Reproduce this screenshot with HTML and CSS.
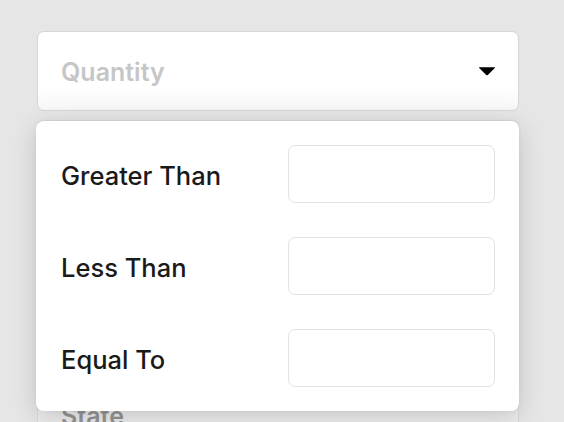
FILE: index.html
```html
<!DOCTYPE html>
<html>
<head>
<meta charset="utf-8">
<link rel="stylesheet" href="styles.css">
</head>
<body>
<div class="page">
  <div class="fields">
    <div class="select">
      <span class="select-label">Quantity</span>
      <svg class="caret" width="18" height="10" viewBox="0 0 18 10"><path d="M1.5 1.2 H16.5 Q17.6 1.2 16.8 2.1 L9.8 8.9 Q9 9.6 8.2 8.9 L1.2 2.1 Q0.4 1.2 1.5 1.2 Z" fill="#000"/></svg>
    </div>
    <div class="rest">
      <div class="field"></div>
      <div class="field"></div>
      <div class="field"></div>
      <div class="field"><span class="field-label">State</span></div>
    </div>
    <div class="popup">
      <div class="row"><span class="row-label">Greater Than</span><input class="num" type="text"></div>
      <div class="row"><span class="row-label">Less Than</span><input class="num" type="text"></div>
      <div class="row"><span class="row-label">Equal To</span><input class="num" type="text"></div>
    </div>
  </div>
</div>
</body>
</html>
```
FILE: styles.css
```css
html, body {
  margin: 0;
  padding: 0;
  background: #e6e6e6;
  font-family: Inter, "Noto Sans", "Liberation Sans", sans-serif;
  overflow: hidden;
}
.page {
  width: 564px;
  height: 422px;
  padding: 31px 45px 0 37px;
  box-sizing: border-box;
}
.fields {
  position: relative;
  display: flex;
  flex-direction: column;
  gap: 9px;
}
.select {
  height: 80px;
  box-sizing: border-box;
  border: 1.5px solid #d6d6d6;
  border-radius: 7px;
  background: linear-gradient(#ffffff 70%, #f6f6f6);
  display: flex;
  align-items: center;
  justify-content: space-between;
  padding: 0 22px 0 23px;
}
.select-label {
  font-size: 25px;
  font-weight: 600;
  color: #c6c6c6;
  margin-top: 1px;
}
.caret { display: block; }
.rest {
  display: flex;
  flex-direction: column;
  gap: 9px;
}
.field {
  height: 77px;
  box-sizing: border-box;
  border: 1.5px solid #dcdcdc;
  border-radius: 7px;
  background: #ececec;
  padding: 22px 23px 0;
}
.field-label {
  font-size: 25px;
  font-weight: 600;
  color: #949494;
}
.popup {
  position: absolute;
  left: -1px;
  top: 90px;
  width: 483px;
  height: 290px;
  box-sizing: border-box;
  background: #fff;
  border-radius: 8px;
  box-shadow: 0 6px 26px rgba(0,0,0,0.16), 0 0 4px rgba(0,0,0,0.05);
  padding: 24px 24px 24px 25px;
  display: flex;
  flex-direction: column;
  gap: 34px;
}
.row {
  display: flex;
  align-items: center;
  justify-content: space-between;
  height: 58px;
}
.row-label {
  font-size: 25.5px;
  font-weight: 500;
  color: #1a1a1a;
  margin-top: 2px;
}
.num {
  width: 207px;
  height: 58px;
  box-sizing: border-box;
  border: 1.5px solid #e2e2e2;
  border-radius: 7px;
  background: #fff;
  outline: none;
  margin: 0;
  padding: 0 12px;
  font: inherit;
}
```
